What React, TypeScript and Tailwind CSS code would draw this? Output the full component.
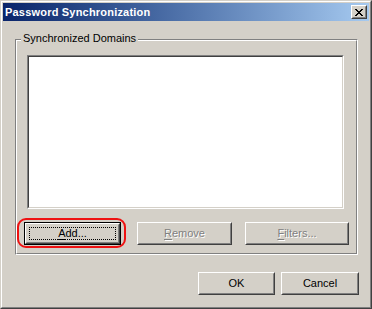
import React from "react";

function Bevel({
  className = "",
  children,
}: {
  className?: string;
  children?: React.ReactNode;
}) {
  return (
    <div
      className={
        "border border-t-white border-l-white border-r-[#404040] border-b-[#404040] bg-[#d4d0c8] " +
        className
      }
    >
      <div className="w-full h-full border border-t-[#d4d0c8] border-l-[#d4d0c8] border-r-[#808080] border-b-[#808080] flex items-center justify-center relative">
        {children}
      </div>
    </div>
  );
}

function CloseGlyph() {
  return (
    <svg width="8" height="7" viewBox="0 0 8 7" shapeRendering="crispEdges">
      <path
        fill="#000"
        d="M0 0h2v1H0z M6 0h2v1H6z M1 1h2v1H1z M5 1h2v1H5z M2 2h4v1H2z M3 3h2v1H3z M2 4h4v1H2z M1 5h2v1H1z M5 5h2v1H5z M0 6h2v1H0z M6 6h2v1H6z"
      />
    </svg>
  );
}

export default function App() {
  const disabled =
    "text-[#808080] [text-shadow:1px_1px_0_#ffffff]";
  return (
    <div className="w-[372px] h-[309px] font-['Liberation_Sans',Arial,sans-serif] text-[11px] leading-[13px] text-black">
      <div className="w-full h-full border border-t-[#d4d0c8] border-l-[#d4d0c8] border-r-[#404040] border-b-[#404040] bg-[#d4d0c8]">
        <div className="w-full h-full border border-t-white border-l-white border-r-[#808080] border-b-[#808080] p-px flex flex-col">
          {/* Title bar */}
          <div className="h-[18px] flex items-center bg-gradient-to-r from-[#0a246a] to-[#a6caf0] shrink-0">
            <span className="pl-[2px] font-bold text-white text-[11px] leading-[13px] tracking-[0.2px]">
              Password Synchronization
            </span>
            <Bevel className="ml-auto mr-[2px] w-[16px] h-[14px]">
              <CloseGlyph />
            </Bevel>
          </div>

          {/* Body */}
          <div className="flex-1 flex flex-col pl-[12px] pt-[18px]">
            {/* Group box */}
            <div className="relative w-[343px] h-[216px] border border-t-[#808080] border-l-[#808080] border-r-white border-b-white">
              <span className="absolute left-[5px] top-[-8px] px-[2px] bg-[#d4d0c8] leading-[13px] whitespace-nowrap">
                Synchronized Domains
              </span>
              <div className="w-full h-full border border-t-white border-l-white border-r-[#808080] border-b-[#808080] pl-[7px] pt-[14px] flex flex-col">
                {/* List box */}
                <div className="ml-[3px] w-[317px] h-[154px] border border-t-[#808080] border-l-[#808080] border-r-white border-b-white">
                  <div className="w-full h-full border border-t-[#404040] border-l-[#404040] border-r-[#d4d0c8] border-b-[#d4d0c8] bg-white" />
                </div>

                {/* Buttons */}
                <div className="mt-[13px] flex">
                  <div className="relative">
                    <div className="w-[97px] h-[23px] border border-black">
                      <Bevel className="w-full h-full">
                        <div className="absolute left-[2px] right-[2px] top-[2px] bottom-[2px] border border-dotted border-black" />
                        <span>
                          <span className="underline underline-offset-[2px]">A</span>dd...
                        </span>
                      </Bevel>
                    </div>
                    <div className="absolute left-[-7px] right-[-5px] top-[-4px] bottom-[-3px] border-[2px] border-[#ee1111] rounded-[9px] pointer-events-none" />
                  </div>
                  <Bevel className="ml-[16px] w-[95px] h-[23px]">
                    <span className={disabled}>
                      <span className="underline underline-offset-[2px]">R</span>emove
                    </span>
                  </Bevel>
                  <Bevel className="ml-[13px] w-[104px] h-[23px]">
                    <span className={disabled}>
                      <span className="underline underline-offset-[2px]">F</span>ilters...
                    </span>
                  </Bevel>
                </div>
              </div>
            </div>

            {/* OK / Cancel */}
            <div className="mt-[17px] flex pl-[183px]">
              <Bevel className="w-[77px] h-[23px]">
                <span>OK</span>
              </Bevel>
              <Bevel className="ml-[6px] w-[78px] h-[23px]">
                <span>Cancel</span>
              </Bevel>
            </div>
          </div>
        </div>
      </div>
    </div>
  );
}
